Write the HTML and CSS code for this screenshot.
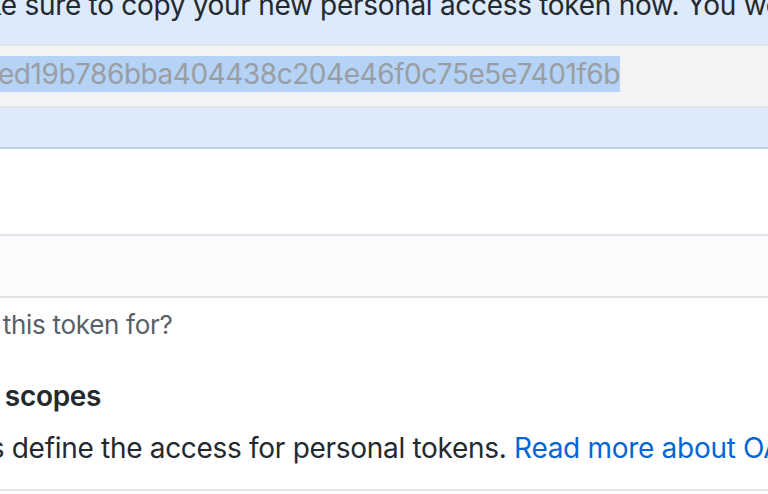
FILE: index.html
```html
<!DOCTYPE html>
<html lang="en">
<head>
<meta charset="utf-8">
<title>Personal access tokens</title>
<link rel="stylesheet" href="styles.css">
</head>
<body>
<main class="viewport">
  <section class="new-token">
    <p class="notice">Make sure to copy your new personal access token now. You won’t be able to see it again!</p>
    <div class="token-box"><code class="token"><span class="sel">ed19b786bba404438c204e46f0c75e5e7401f6b</span></code></div>
  </section>
  <div class="spacer"></div>
  <div class="note-input"></div>
  <p class="note-hint">What’s this token for?</p>
  <h3 class="scopes-title">Select scopes</h3>
  <p class="scopes-desc">Scopes define the access for personal tokens. <a class="link" href="#">Read more about OAuth scopes.</a></p>
  <div class="table-top"></div>
</main>
</body>
</html>
```
FILE: styles.css
```css
html, body {
  margin: 0;
  padding: 0;
  background: #ffffff;
}
body {
  width: 768px;
  height: 494px;
  overflow: hidden;
  font-family: "Inter", "Liberation Sans", sans-serif;
  font-size: 28px;
  letter-spacing: -0.3px;
  color: #24292e;
}
.viewport {
  width: 768px;
  overflow: hidden;
  white-space: nowrap;
}
.new-token {
  background: #dceafc;
  border-bottom: 2px solid #bccfe8;
  padding-bottom: 39px;
}
.notice {
  margin: -16px 0 0 -54px;
  line-height: 42px;
  padding-bottom: 18px;
  color: #24292e;
}
.token-box {
  background: #f2f3f5;
  border-top: 2px solid #e0e3e7;
  border-bottom: 2px solid #e0e3e7;
  height: 60px;
  box-sizing: content-box;
}
.token {
  display: block;
  padding-top: 10px;
  margin-left: -2px;
  font-family: inherit;
  font-size: 28px;
  letter-spacing: -0.45px;
  line-height: 36px;
}
.sel {
  display: inline-block;
  background: #b4d3f6;
  color: #9a9ea3;
}
.spacer {
  height: 85px;
}
.note-input {
  height: 60px;
  background: #fafbfc;
  border-top: 2px solid #e1e4e8;
  border-bottom: 2px solid #e1e4e8;
}
.note-hint {
  margin: 7px 0 0 -85px;
  font-size: 26px;
  line-height: 39px;
  color: #586069;
}
.scopes-title {
  margin: 31px 0 0 -85px;
  font-size: 28px;
  line-height: 42px;
  font-weight: 600;
  color: #24292e;
}
.scopes-desc {
  margin: 10px 0 0 -93px;
  line-height: 42px;
  color: #24292e;
}
.link {
  color: #0366d6;
  text-decoration: none;
}
.table-top {
  margin-top: 20px;
  border-top: 2px solid #e1e4e8;
  height: 10px;
}
```
